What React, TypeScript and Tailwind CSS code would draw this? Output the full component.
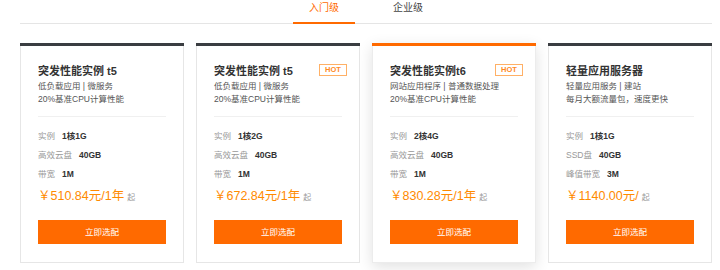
const plans = [
  {
    title: '突发性能实例 t5',
    hot: false,
    featured: false,
    lines: ['低负载应用 | 微服务', '20%基准CPU计算性能'],
    specs: [
      ['实例', '1核1G'],
      ['高效云盘', '40GB'],
      ['带宽', '1M'],
    ],
    price: '￥510.84元/1年',
  },
  {
    title: '突发性能实例 t5',
    hot: true,
    featured: false,
    lines: ['低负载应用 | 微服务', '20%基准CPU计算性能'],
    specs: [
      ['实例', '1核2G'],
      ['高效云盘', '40GB'],
      ['带宽', '1M'],
    ],
    price: '￥672.84元/1年',
  },
  {
    title: '突发性能实例t6',
    hot: true,
    featured: true,
    lines: ['网站应用程序 | 普通数据处理', '20%基准CPU计算性能'],
    specs: [
      ['实例', '2核4G'],
      ['高效云盘', '40GB'],
      ['带宽', '1M'],
    ],
    price: '￥830.28元/1年',
  },
  {
    title: '轻量应用服务器',
    hot: false,
    featured: false,
    lines: ['轻量应用服务 | 建站', '每月大额流量包，速度更快'],
    specs: [
      ['实例', '1核1G'],
      ['SSD盘', '40GB'],
      ['峰值带宽', '3M'],
    ],
    price: '￥1140.00元/',
  },
];

function PlanCard({ plan }: { plan: (typeof plans)[number] }) {
  return (
    <div
      className={`relative w-[164px] bg-white border border-t-0 ${
        plan.featured ? 'border-[#ececec] shadow-[0_4px_14px_rgba(0,0,0,0.12)]' : 'border-[#e6e6e6]'
      }`}
    >
      <div className={`h-[3px] -mx-px ${plan.featured ? 'bg-[#ff6a00]' : 'bg-[#3a3d41]'}`} />
      {plan.hot && (
        <span className="absolute right-[12px] top-[21px] w-[28px] h-[12px] border border-[#ffb066] text-[#ff8a1f] text-[7.5px] font-bold leading-[10px] text-center">
          HOT
        </span>
      )}
      <div className="px-[17px] pt-[16px] pb-[18px]">
        <div className="text-[11px] leading-[18px] font-bold text-[#333]">{plan.title}</div>
        <div className="text-[8.5px] leading-[13px] text-[#555]">
          {plan.lines.map((l) => (
            <div key={l}>{l}</div>
          ))}
        </div>
        <div className="mt-[10px] h-px bg-[#f0f0f0]" />
        <div className="mt-[10px] text-[8.5px] leading-[19px]">
          {plan.specs.map(([k, v]) => (
            <div key={k} className="flex">
              <span className="text-[#999] mr-[7px]">{k}</span>
              <span className="text-[#333] font-bold">{v}</span>
            </div>
          ))}
        </div>
        <div className="mt-[1px] flex items-baseline leading-[22px]">
          <span className="text-[12.5px] text-[#ff8a00]">{plan.price}</span>
          <span className="ml-[3px] text-[8px] text-[#999]">起</span>
        </div>
        <button className="mt-[11px] w-full h-[24px] bg-[#ff6a00] text-white text-[8.5px]">立即选配</button>
      </div>
    </div>
  );
}

export default function App() {
  return (
    <div
      className="w-[720px] h-[270px] bg-white overflow-hidden"
      style={{ fontFamily: '"Liberation Sans", "Noto Sans CJK SC", sans-serif' }}
    >
      <div className="ml-[20px] w-[692px]">
        <div className="flex justify-center gap-[22px] border-b border-[#e5e5e5]">
          <div className="w-[62px] h-[24px] -mb-px border-b-2 border-[#ff6a00] text-center text-[10px] leading-[16px] text-[#ff6a00]">
            入门级
          </div>
          <div className="w-[62px] h-[24px] -mb-px text-center text-[10px] leading-[16px] text-[#444]">
            企业级
          </div>
        </div>
        <div className="mt-[19px] flex gap-[12px]">
          {plans.map((p, i) => (
            <PlanCard key={i} plan={p} />
          ))}
        </div>
      </div>
    </div>
  );
}
